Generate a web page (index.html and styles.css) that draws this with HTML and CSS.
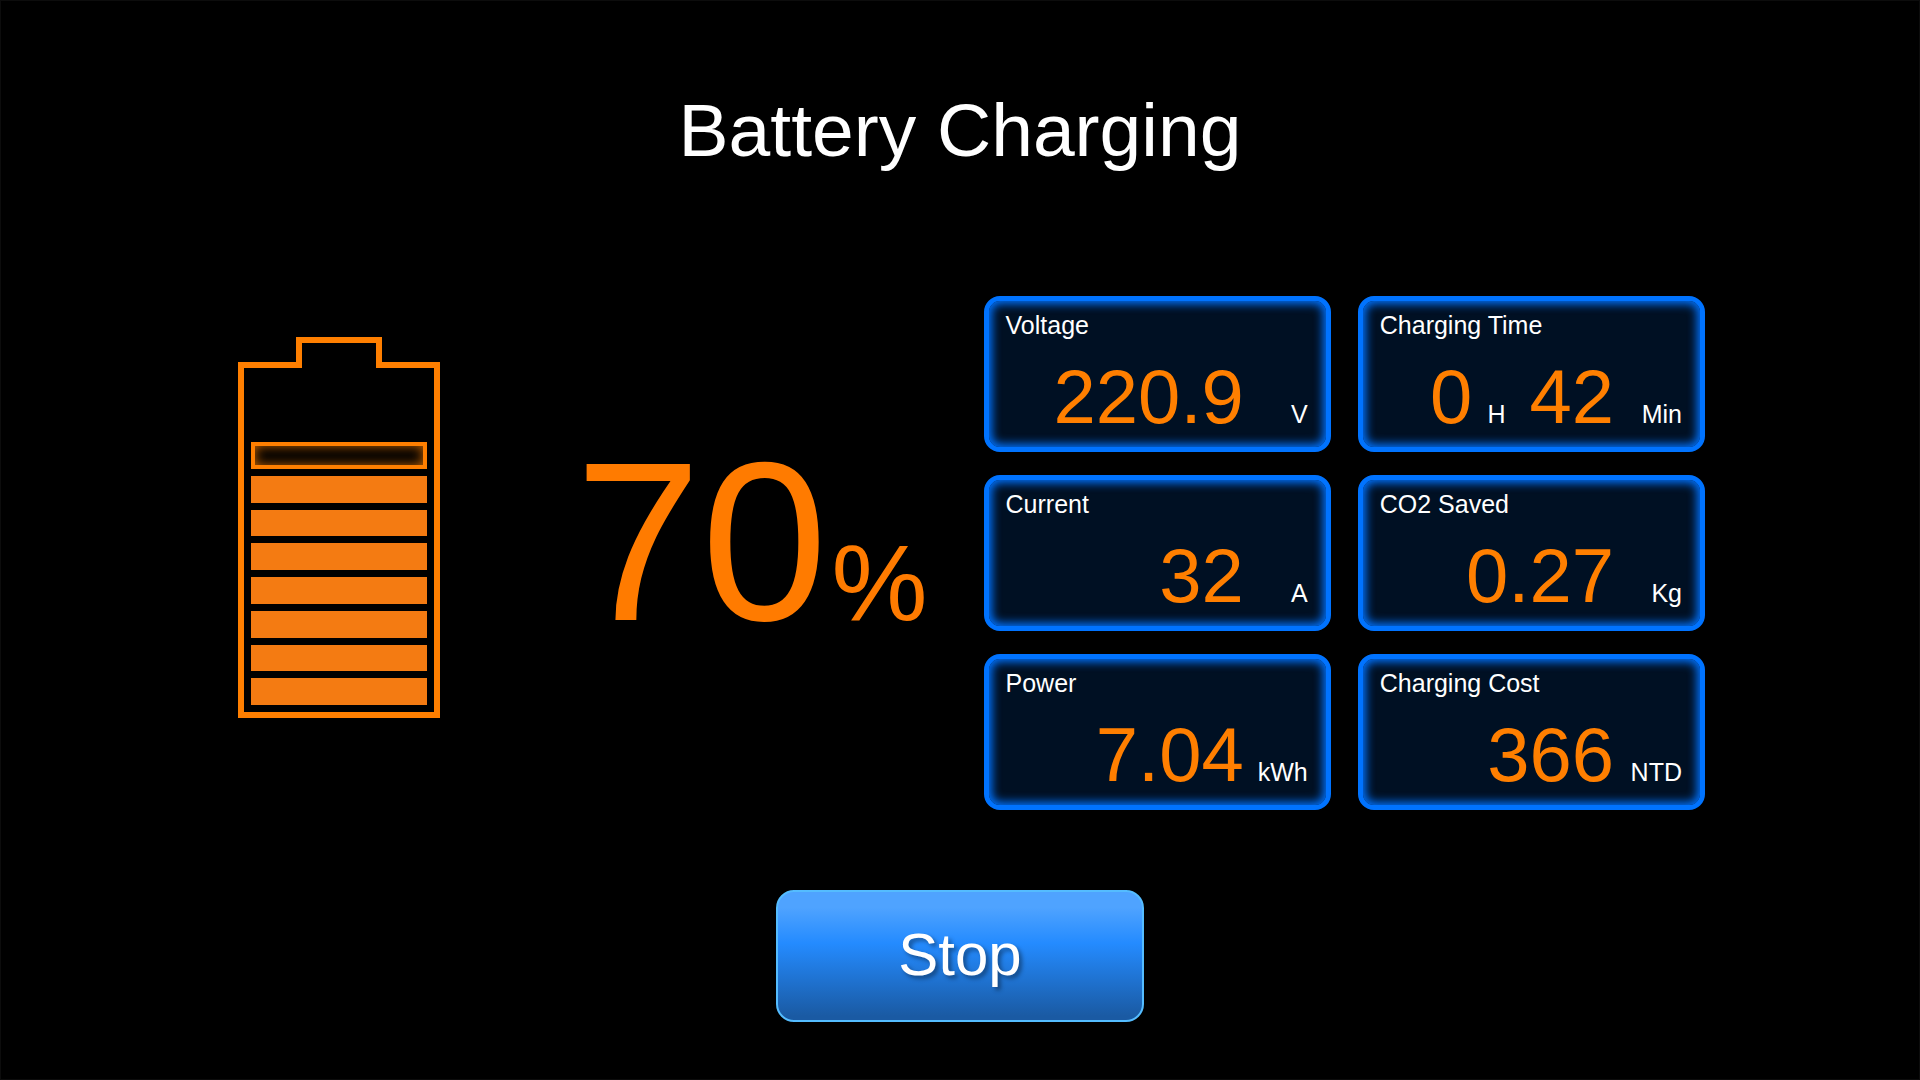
FILE: index.html
```html
<!DOCTYPE html>
<html lang="en">
<head>
  <meta charset="UTF-8">
  <meta name="viewport" content="width=device-width, initial-scale=1.0">
  <title>Battery Charging</title>
  <link rel="stylesheet" href="styles.css">
</head>
<body>
  <div class="screen">
    <h1 class="title">Battery Charging</h1>

    <main class="status">
      <div class="battery">
        <div class="battery-cap"></div>
        <div class="battery-body">
          <div class="battery-cells">
            <div class="cell charging"></div>
            <div class="cell"></div>
            <div class="cell"></div>
            <div class="cell"></div>
            <div class="cell"></div>
            <div class="cell"></div>
            <div class="cell"></div>
            <div class="cell"></div>
          </div>
        </div>
      </div>

      <div class="percent">
        <span class="percent-number">70</span><span class="percent-sign">%</span>
      </div>

      <div class="cards">
        <div class="card-column">
          <section class="card">
            <h2 class="card-label">Voltage</h2>
            <div class="card-row">
              <span class="value">220.9</span>
              <span class="unit">V</span>
            </div>
          </section>
          <section class="card">
            <h2 class="card-label">Current</h2>
            <div class="card-row">
              <span class="value">32</span>
              <span class="unit">A</span>
            </div>
          </section>
          <section class="card">
            <h2 class="card-label">Power</h2>
            <div class="card-row">
              <span class="value">7.04</span>
              <span class="unit">kWh</span>
            </div>
          </section>
        </div>

        <div class="card-column wide-units">
          <section class="card">
            <h2 class="card-label">Charging Time</h2>
            <div class="card-row">
              <span class="value">0</span>
              <span class="unit-hour">H</span>
              <span class="value">42</span>
              <span class="unit">Min</span>
            </div>
          </section>
          <section class="card">
            <h2 class="card-label">CO2 Saved</h2>
            <div class="card-row">
              <span class="value">0.27</span>
              <span class="unit">Kg</span>
            </div>
          </section>
          <section class="card">
            <h2 class="card-label">Charging Cost</h2>
            <div class="card-row">
              <span class="value">366</span>
              <span class="unit">NTD</span>
            </div>
          </section>
        </div>
      </div>
    </main>

    <button class="stop-button" type="button">Stop</button>
  </div>
</body>
</html>
```
FILE: styles.css
```css
* {
  box-sizing: border-box;
}

body {
  margin: 0;
  background-color: #000;
  color: #fff;
  font-family: Arial, "Liberation Sans", sans-serif;
}

.screen {
  display: flex;
  flex-direction: column;
  align-items: center;
  min-height: 100vh;
  padding: 86px 0 56px;
  border: 1px solid #0c0c0c;
}

.title {
  margin: 0 0 123px;
  font-size: 75px;
  font-weight: normal;
  line-height: 86px;
}

.status {
  display: flex;
  align-items: flex-start;
  width: 100%;
  padding: 0 214px 0 237px;
}

/* battery */
.battery {
  display: flex;
  flex-direction: column;
  align-items: center;
  width: 202px;
  margin-top: 41px;
}

.battery-cap {
  z-index: 1;
  width: 86px;
  height: 31px;
  margin-bottom: -6px;
  border: 6px solid #ff7f00;
  border-bottom: none;
  background-color: #000; /* hides the body border under the cap */
}

.battery-body {
  display: flex;
  flex-direction: column;
  justify-content: flex-end;
  width: 100%;
  height: 356px;
  padding: 7px;
  border: 6px solid #ff7f00;
}

.battery-cells {
  display: grid;
  grid-auto-rows: 1fr;
  gap: 7px;
  height: 263px;
}

.cell {
  background-color: #f47b12;
}

.cell.charging {
  border: 4px solid #ff7f00;
  background-color: #000;
  box-shadow: inset 0 0 12px #c46200;
}

/* charge level */
.percent {
  display: flex;
  align-items: baseline;
  gap: 4px;
  margin: 118px 56px 0 135px;
  color: #ff7b00;
}

.percent-number {
  font-size: 227px;
  line-height: 256px;
}

.percent-sign {
  font-size: 108px;
  line-height: 128px;
}

/* readings */
.cards {
  display: flex;
  flex: 1;
  gap: 27px;
}

.card-column {
  display: flex;
  flex: 1;
  flex-direction: column;
  gap: 23px;
}

.card {
  padding: 9px 18px 8px 17px;
  border: 5px solid #0073ff;
  border-radius: 16px;
  background-color: #001023;
  box-shadow: inset 0 0 10px 3px #0073ff;
}

.card-label {
  margin: 0 0 15px;
  font-size: 25px;
  font-weight: normal;
  line-height: 30px;
}

.card-row {
  display: flex;
  align-items: baseline;
  justify-content: flex-end;
}

.value {
  color: #ff7f00;
  font-size: 76px;
  line-height: 84px;
}

.unit,
.unit-hour {
  font-size: 25px;
  line-height: 30px;
}

.unit {
  width: 64px;
  text-align: right;
}

.wide-units .unit {
  width: 68px;
}

.unit-hour {
  margin: 0 24px 0 15px;
}

.stop-button {
  width: 368px;
  height: 132px;
  margin-top: 80px;
  padding: 0 0 4px;
  border: 2px solid #54bcff;
  border-radius: 18px;
  background: linear-gradient(#4fa3ff 12%, #248bff 40%, #1a5aa3 97%);
  color: #fff;
  font-family: inherit;
  font-size: 60px;
  text-shadow: 3px 3px 4px rgba(0, 0, 0, 0.4);
  cursor: pointer;
}
```
